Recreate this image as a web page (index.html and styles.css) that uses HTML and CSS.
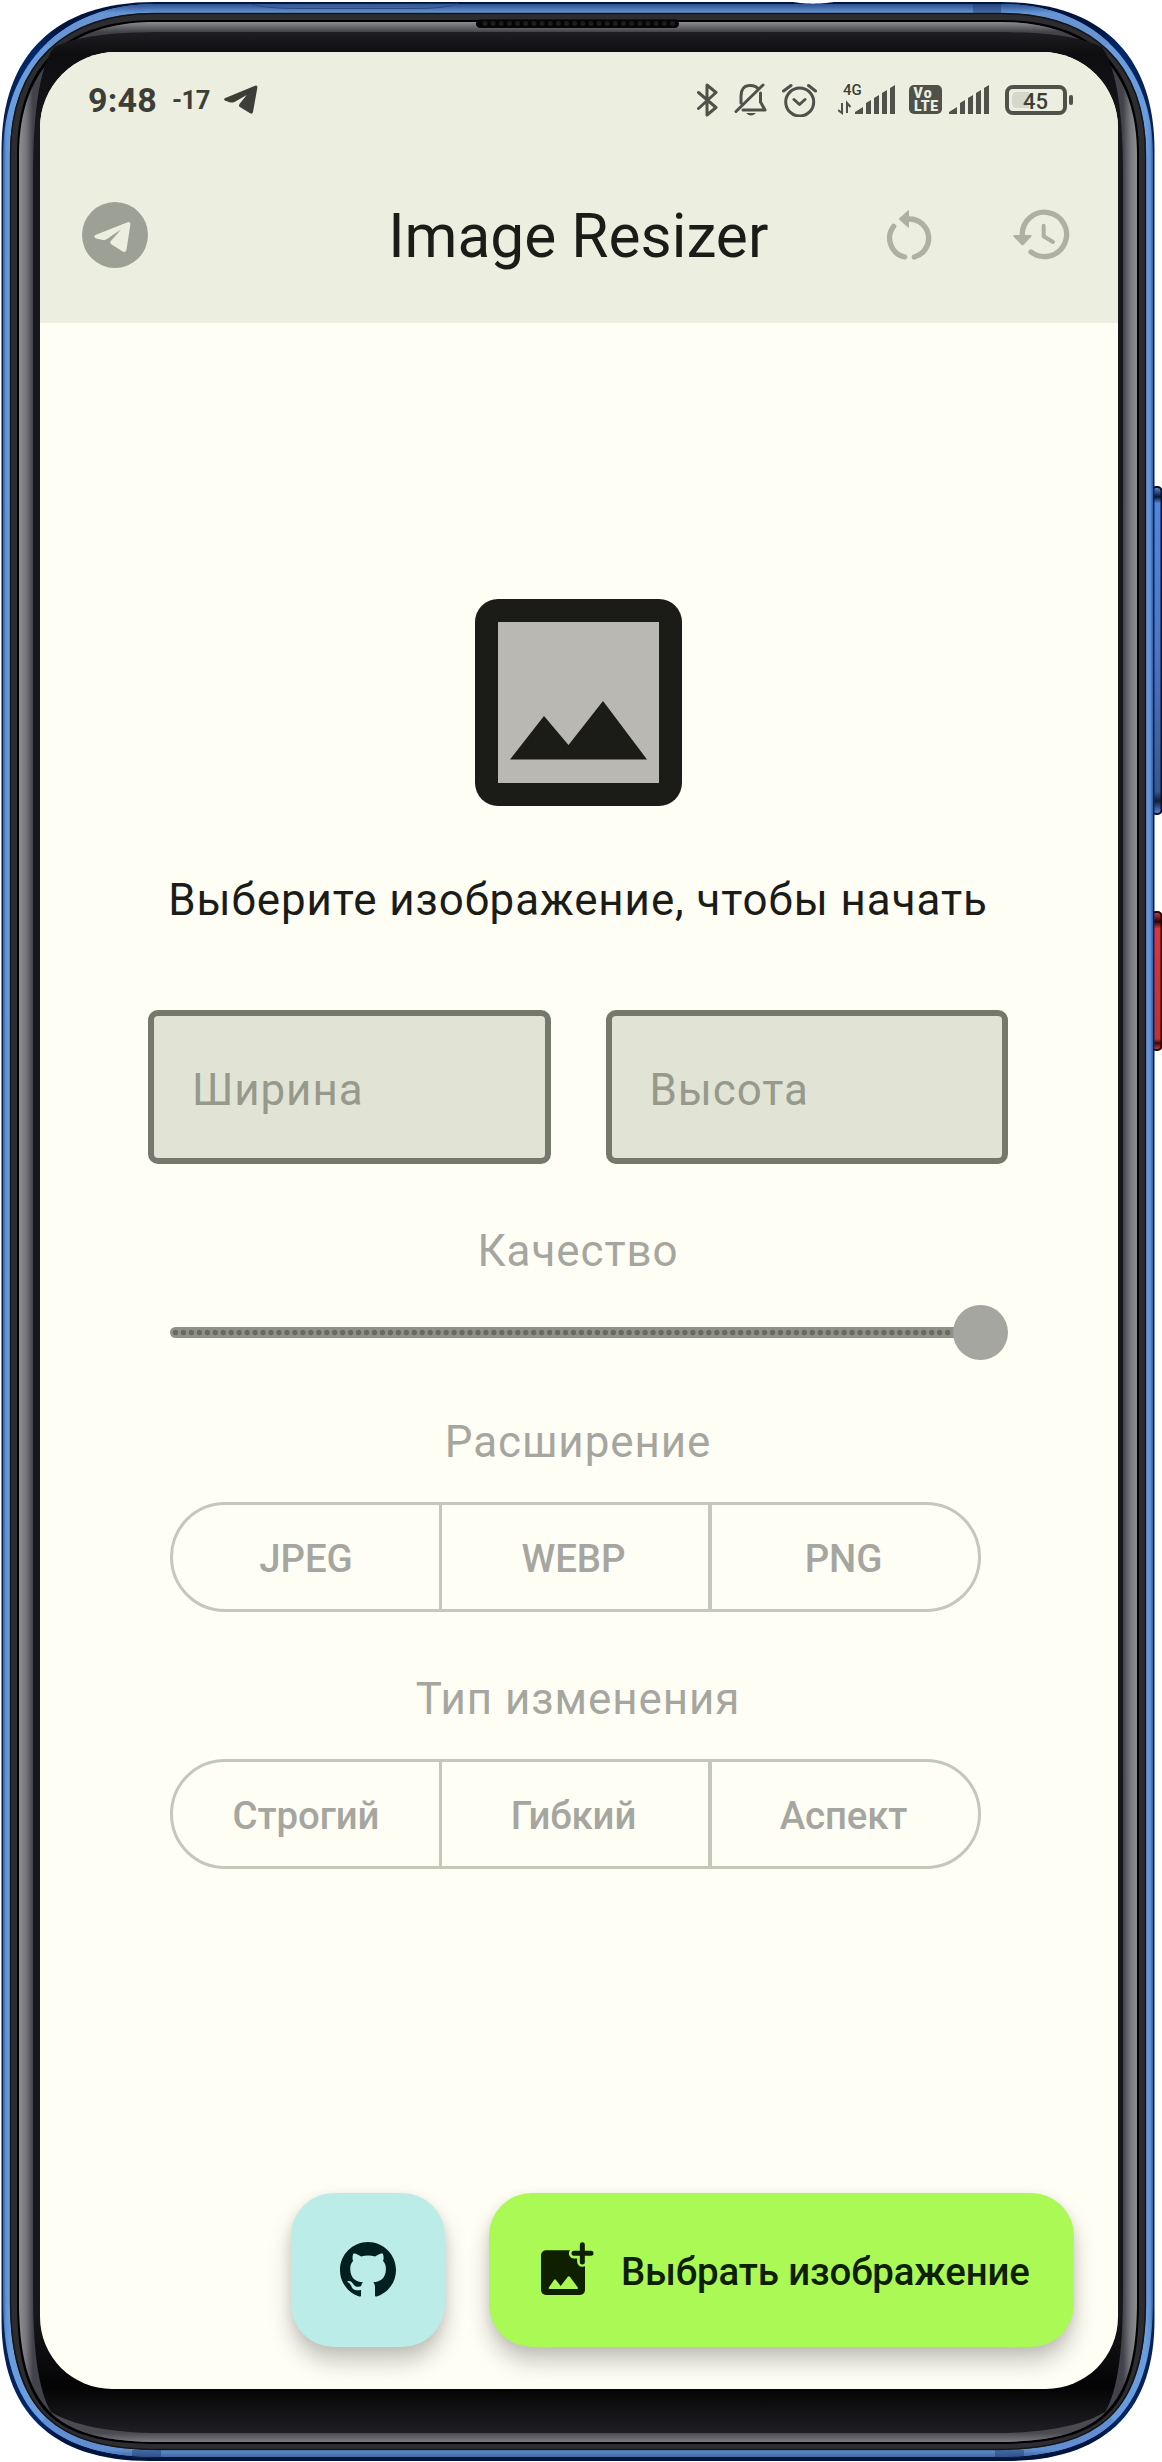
FILE: index.html
```html
<!DOCTYPE html>
<html lang="ru">
<head>
<meta charset="utf-8">
<title>Image Resizer</title>
<link rel="stylesheet" href="styles.css">
</head>
<body>
<div class="phone">
  <svg class="frame" width="1162" height="2462" viewBox="0 0 1162 2462" aria-hidden="true">
    <defs>
      <linearGradient id="blueSide" gradientUnits="userSpaceOnUse" x1="3" y1="0" x2="10" y2="0"><stop offset="0" stop-color="#2f5ea6"/><stop offset=".4" stop-color="#5f92d6"/><stop offset="1" stop-color="#6a9ddd"/></linearGradient>
      <linearGradient id="blueTop" gradientUnits="userSpaceOnUse" x1="0" y1="4" x2="0" y2="13"><stop offset="0" stop-color="#2c5090"/><stop offset="1" stop-color="#6795d3"/></linearGradient>
      <linearGradient id="blueBottom" gradientUnits="userSpaceOnUse" x1="0" y1="2450" x2="0" y2="2457"><stop offset="0" stop-color="#5f8fd2"/><stop offset="1" stop-color="#40699f"/></linearGradient>
      <linearGradient id="navy" gradientUnits="userSpaceOnUse" x1="0" y1="0" x2="60" y2="0"><stop offset="0" stop-color="#0a1f4e"/><stop offset=".6" stop-color="#00286a"/><stop offset="1" stop-color="#001440"/></linearGradient>
      <linearGradient id="graySide" gradientUnits="userSpaceOnUse" x1="19" y1="0" x2="33" y2="0"><stop offset="0" stop-color="#8f8f93"/><stop offset=".5" stop-color="#75757c"/><stop offset="1" stop-color="#42424b"/></linearGradient>
      <linearGradient id="grayTop" gradientUnits="userSpaceOnUse" x1="0" y1="22" x2="0" y2="32"><stop offset="0" stop-color="#8b8d90"/><stop offset="1" stop-color="#424248"/></linearGradient>
      <linearGradient id="grayBottom" gradientUnits="userSpaceOnUse" x1="0" y1="2433" x2="0" y2="2442"><stop offset="0" stop-color="#4a4a50"/><stop offset="1" stop-color="#7b7b82"/></linearGradient>
      <linearGradient id="bezel" gradientUnits="userSpaceOnUse" x1="0" y1="32" x2="0" y2="2433"><stop offset="0" stop-color="#1f1e23"/><stop offset=".009" stop-color="#0e0e10"/><stop offset=".04" stop-color="#17171b"/><stop offset=".95" stop-color="#17171b"/><stop offset=".981" stop-color="#040405"/><stop offset="1" stop-color="#1f1e23"/></linearGradient>
      <linearGradient id="volume" x1="0" y1="0" x2="0" y2="1"><stop offset="0" stop-color="#5a8de0"/><stop offset=".03" stop-color="#0a1430"/><stop offset=".05" stop-color="#5186e0"/><stop offset=".5" stop-color="#4a75c4"/><stop offset=".93" stop-color="#35588f"/><stop offset=".96" stop-color="#141f3a"/><stop offset="1" stop-color="#5a8de0"/></linearGradient>
      <linearGradient id="power" x1="0" y1="0" x2="0" y2="1"><stop offset="0" stop-color="#d8404a"/><stop offset=".07" stop-color="#260408"/><stop offset=".12" stop-color="#d8353f"/><stop offset=".92" stop-color="#c23038"/><stop offset=".95" stop-color="#3a080c"/><stop offset="1" stop-color="#d8404a"/></linearGradient>
      <clipPath id="topEdge"><path d="M0 0L53 48L150 120H580V0z"/></clipPath>
      <clipPath id="bottomEdge"><path d="M0 2462L50 2413L150 2320H580V2462z"/></clipPath>
      <g id="half">
        <path fill="url(#navy)" d="M579 2461H150C50 2461 1.5 2410 1.5 2320V150C1.5 55 55 2 155 2H579z"/>
        <path fill="url(#blueSide)" d="M579 2457H160C52 2457 3 2413 3 2300V155C3 63 64 4 155 4H579z"/>
        <g clip-path="url(#topEdge)"><path fill="url(#blueTop)" d="M579 2457H160C52 2457 3 2413 3 2300V155C3 63 64 4 155 4H579z"/></g>
        <g clip-path="url(#bottomEdge)"><path fill="url(#blueBottom)" d="M579 2457H160C52 2457 3 2413 3 2300V155C3 63 64 4 155 4H579z"/></g>
        <path fill="#2c2c31" d="M579 2450H160C56 2450 10 2412 10 2300V155C10 62 66 13 155 13H579z"/>
        <path fill="none" stroke="#151517" stroke-width="1.4" d="M579 2449.500H160C56 2449.500 10.500 2412 10.500 2300V155C10.500 62 66 13.500 155 13.500H579"/>
        <path fill="#000" d="M579 2444H160C52 2444 17 2412 17 2300V155C17 63 67 20 155 20H579z"/>
        <path fill="url(#graySide)" d="M579 2442H160C55 2442 19 2409 19 2300V155C19 66 70 22 155 22H579z"/>
        <g clip-path="url(#topEdge)"><path fill="url(#grayTop)" d="M579 200H19V155C19 66 70 22 155 22H579z"/></g>
        <g clip-path="url(#bottomEdge)"><path fill="url(#grayBottom)" d="M579 2442H160C55 2442 19 2409 19 2300V2200H579z"/></g>
        <path fill="url(#bezel)" d="M579 2433H160C110 2433 72 2425 51 2412C38 2390 33 2350 33 2290V175C33 120 38 70 54 47C78 36 110 32 165 32H579z"/>
      </g>
    </defs>
    <rect x="1152" y="487" width="9.500" height="327" rx="4" fill="url(#volume)" stroke="#0a1024" stroke-width="2"/>
    <rect x="1152" y="912" width="9.500" height="138" rx="4" fill="url(#power)" stroke="#1c0608" stroke-width="2"/>
    <use href="#half"/>
    <use href="#half" transform="translate(1156) scale(-1 1)"/>
    <path d="M250 4C262 7 275 8.500 300 8.500H415C435 8.500 450 7 458 3.500" fill="#39609c" fill-opacity=".5" stroke="#2d4a7a" stroke-width="1"/>
    <path d="M790 1C800 4.500 825 4.500 838 1z" fill="#fff"/>
    <g fill="#1a2f5e" fill-opacity=".4"><path d="M973 4h28v9h-28zM132 2450h29v8h-29zM995 2450h29v8h-29z"/></g>
    <rect x="476" y="19.500" width="203" height="8.500" rx="4.250" fill="#050505"/>
    <path d="M485 23.500H674" stroke="#1d1d1d" stroke-width="5" stroke-linecap="round" stroke-dasharray="0 8.150"/>
  </svg>

  <main class="screen">
    <header class="header">
      <div class="status">
        <span class="time">9:48</span>
        <span class="temp">-17</span>
        <svg class="plane" width="34" height="30" viewBox="673 257 102 90"><path fill="#3d3e38" d="M677 296L766 259Q774 256 773 265L760 338Q758 346 750 341L722 324Q715 320 720 313L741 287L706 307Q698 311 690 309L677 304Q669 300 677 296z"/></svg>
        <div class="status-icons">
          <svg width="21" height="34" viewBox="0 0 21 34"><path d="M1.500 9.500L19 24.500L10 32V2L19 9.500L1.500 25.500" class="line"/></svg>
          <svg width="33" height="34" viewBox="0 0 33 34"><path d="M29 2L2 28.500M7 20V13C7 6 10 3 15 2.500C19 2 22 3 24.500 6M26.500 10V19L31 27H9" class="line"/><path d="M12 30H22Q17 35 12 30z" fill="#50514a"/></svg>
          <svg width="35" height="34" viewBox="0 0 35 34"><circle cx="17.700" cy="19" r="14" class="line"/><path d="M12 16.500L17.500 21.500L23 16.500M1.500 8L9 2.500M26.500 2.500L33.500 8" class="line"/></svg>
          <svg width="57" height="42" viewBox="0 -4 57 42"><text x="5" y="12" class="net">4G</text><path d="M4 20V30L0 27M9 30V20L12.500 24" class="thin"/><path class="fill" d="M17 31V29L25 24V31zM28 31V20L33 17V31zM36 31V15L41 12V31zM44 31V10L49 7V31zM52 31V5L57 2V31z"/></svg>
          <svg width="33" height="30" viewBox="0 0 33 30"><rect width="33" height="29" rx="5" class="fill"/><text x="4.500" y="13" class="volte" textLength="18">Vo</text><text x="5" y="26" class="volte" textLength="24">LTE</text></svg>
          <svg width="40" height="34" viewBox="17 0 40 34"><path class="fill" d="M17 31V29L25 24V31zM28 31V20L33 17V31zM36 31V15L41 12V31zM44 31V10L49 7V31zM52 31V5L57 2V31z"/></svg>
          <svg width="69" height="30" viewBox="0 0 69 30"><path d="M12 7H24V23H12Q7 23 7 18V12Q7 7 12 7z" fill="#d5d7ca"/><rect x="2" y="2" width="58" height="26" rx="6" fill="none" stroke="#50514a" stroke-width="4"/><rect x="64" y="10" width="4" height="10" rx="2" class="fill"/><text x="18" y="23.500" class="level">45</text></svg>
        </div>
      </div>
      <div class="appbar">
        <svg class="channel" width="66" height="66" viewBox="246 605.500 198 198"><circle cx="345" cy="704.500" r="99" fill="#9da094"/><path fill="#ecefe0" d="M288 704L381 667Q392 662 391 674L380 746Q378 760 367 753L336 734Q327 729 333 722L364 687L322 716Q315 721 306 719L288 715Q278 709 288 704z"/></svg>
        <h1 class="title">Image Resizer</h1>
        <div class="actions">
          <svg width="46" height="50" viewBox="372 628 138 150"><path d="M428 769A58 58 0 0 1 395 677M441 655A58 58 0 0 1 457 769" class="action"/><path d="M412 653L437 630Q441 627 441 632V678Q441 683 437 680L412 657Q410 655 412 653z" fill="#aeb0a2"/></svg>
          <svg width="57" height="52" viewBox="751 627 171 156"><path d="M779 708A66.500 66.500 0 1 1 805 756" class="action"/><path d="M843 677V709L871 726" class="action hands"/><path d="M755 705H803Q809 706 805 711L783 734Q780 738 776 734L753 710Q750 706 755 705z" fill="#aeb0a2"/></svg>
        </div>
      </div>
    </header>

    <section class="content">
      <svg class="picture" width="207" height="207" viewBox="0 0 207 207"><rect width="207" height="207" rx="23" fill="#1b1c18"/><path d="M23 23H184V184H23z" fill="#b9b8b3"/><path d="M35 160.500L69 117L93.500 146L128 102L172 160.500z" fill="#1b1c18"/></svg>
      <p class="prompt">Выберите изображение, чтобы начать</p>
      <div class="fields">
        <div class="field">Ширина</div>
        <div class="field">Высота</div>
      </div>
      <p class="label label-quality">Качество</p>
      <div class="slider">
        <svg width="838" height="55" viewBox="0 0 838 55"><path d="M5.500 27.500H810" stroke="#90928a" stroke-width="11" stroke-linecap="round"/><path d="M5.500 27.500H800" stroke="#686a62" stroke-width="5.400" stroke-linecap="round" stroke-dasharray="0 7.960"/><circle cx="810.500" cy="27.500" r="27.500" fill="#a6a6a0"/></svg>
      </div>
      <p class="label label-format">Расширение</p>
      <div class="segments"><span>JPEG</span><span>WEBP</span><span>PNG</span></div>
      <p class="label label-type">Тип изменения</p>
      <div class="segments"><span>Строгий</span><span>Гибкий</span><span>Аспект</span></div>
    </section>

    <footer class="fabs">
      <div class="fab fab-github">
        <svg width="56" height="56" viewBox="0 0 16 16"><path fill="#002020" d="M8 0C3.580 0 0 3.580 0 8c0 3.540 2.290 6.530 5.470 7.590.4.070.55-.17.55-.38 0-.19-.01-.82-.01-1.490-2.010.37-2.530-.49-2.690-.94-.09-.23-.48-.94-.82-1.130-.28-.15-.68-.52-.01-.53.63-.01 1.080.58 1.230.82.72 1.210 1.870.87 2.330.66.07-.52.28-.87.51-1.070-1.780-.2-3.640-.89-3.640-3.950 0-.87.31-1.590.82-2.150-.08-.2-.36-1.020.08-2.120 0 0 .67-.21 2.200.82.64-.18 1.320-.27 2-.27s1.360.09 2 .27c1.530-1.040 2.200-.82 2.200-.82.44 1.100.16 1.920.08 2.120.51.56.82 1.270.82 2.150 0 3.070-1.870 3.750-3.650 3.950.29.25.54.73.54 1.480 0 1.070-.01 1.930-.01 2.200 0 .21.15.46.55.38A8.010 8.010 0 0 0 16 8c0-4.420-3.580-8-8-8z"/></svg>
      </div>
      <div class="fab fab-pick">
        <svg width="53" height="54" viewBox="843 246 159 162"><rect x="843" y="271" width="132" height="134" rx="15" fill="#0f2000"/><path d="M942 280H993M967 254V305" stroke="#aaf955" stroke-width="31" stroke-linecap="round"/><path d="M942 280H993M967 254V306" stroke="#0f2000" stroke-width="15" stroke-linecap="round"/><path d="M867 382L882 360Q885 356 888 360L902 378L923 351Q927 346 930 351L953 382Q955 387 950 387H869Q864 387 867 382z" fill="#aaf955"/></svg>
        <span>Выбрать изображение</span>
      </div>
    </footer>
  </main>
</div>
</body>
</html>
```

FILE: styles.css
```css
* { box-sizing: border-box; }
body { margin: 0; background: #fff; font-family: Roboto, "Noto Sans", sans-serif; color: #1b1c18; }
svg { display: block; flex: none; }
p, h1 { margin: 0; font-weight: 400; }

.phone { display: grid; width: 1162px; height: 2462px; overflow: hidden; }
.frame, .screen { grid-area: 1 / 1; }
.screen {
  display: flex; flex-direction: column;
  width: 1078px; height: 2337px; margin: 52px 0 0 39.5px;
  border-radius: 76px 76px 72px 72px; overflow: hidden; background: #fefef5;
}

.header { height: 271px; background: #ecefe0; }
.status { display: flex; align-items: center; height: 96px; padding: 0 43.5px 0 48.5px; }
.time { width: 84px; font-size: 34px; font-weight: 700; letter-spacing: .2px; color: #3d3e38; }
.temp { width: 52px; font-size: 25.5px; font-weight: 700; letter-spacing: -.5px; color: #3d3e38; }
.status-icons { display: flex; align-items: center; margin-left: auto; }
.status-icons svg:nth-child(2) { margin-left: 16px; }
.status-icons svg:nth-child(3) { margin-left: 15px; }
.status-icons svg:nth-child(4) { margin-left: 21px; }
.status-icons svg:nth-child(5) { margin-left: 14px; }
.status-icons svg:nth-child(6) { margin-left: 7px; }
.status-icons svg:nth-child(7) { margin-left: 16px; }
.line { fill: none; stroke: #50514a; stroke-width: 3; stroke-linecap: round; stroke-linejoin: round; }
.thin { fill: none; stroke: #50514a; stroke-width: 2; }
.fill { fill: #50514a; }
.net { font: 500 15px Roboto, sans-serif; fill: #3d3e38; }
.volte { font: 900 14px Roboto, sans-serif; fill: #ecefe0; }
.level { font: 500 22px Roboto, sans-serif; fill: #3d3e38; }

.appbar { display: grid; grid-template-columns: 1fr auto 1fr; align-items: center; height: 175px; padding: 0 48px 0 42.5px; }
.channel { margin-bottom: 2px; }
.title { padding: 3px 0 0 5px; font-size: 60.4px; line-height: 76px; }
.actions { display: flex; align-items: center; justify-content: flex-end; gap: 81px; padding-bottom: 2px; }
.action { fill: none; stroke: #aeb0a2; stroke-width: 16; stroke-linecap: round; stroke-linejoin: round; }
.hands { stroke-width: 12; }

.content { display: flex; flex-direction: column; align-items: center; flex: 1; padding: 276px 1px 0 0; }
.prompt, .label, .field { font-size: 43.9px; line-height: 66px; letter-spacing: .95px; white-space: nowrap; }
.prompt { margin-top: 61px; }
.fields { display: flex; gap: 55px; width: 860px; margin-top: 77px; }
.field {
  flex: 1; height: 154px; padding: 41px 38px; border: 6px solid #75796c; border-radius: 10px;
  background: #e1e4d5; color: #96998c;
}
.label { color: #a6a6a0; }
.label-quality { margin-top: 54px; }
.slider { width: 838px; margin: 21px 0 0 22px; }
.label-format { margin-top: 49px; }
.label-type { margin-top: 54px; }
.segments {
  display: grid; grid-template-columns: 266px 269px 1fr; width: 811px; height: 110px; margin: 27px 5px 0 0;
  border: 3px solid #c4c8b9; border-radius: 55px;
}
.segments span {
  display: flex; align-items: center; justify-content: center; padding-top: 2px;
  font-size: 38.4px; font-weight: 500; color: #a6a6a0; letter-spacing: -.1px;
}
.segments span + span { padding-right: 3px; border-left: 3px solid #c4c8b9; }
.segments span:last-child { border-left-width: 4px; }

.fabs { display: flex; justify-content: flex-end; gap: 44px; padding: 0 43.5px 42px 0; }
.fab {
  display: flex; align-items: center; height: 154px; border-radius: 43px;
  box-shadow: 0 15px 22px rgba(0, 0, 0, .22), 0 2px 12px rgba(0, 0, 0, .07);
}
.fab-github { justify-content: center; width: 154px; background: #bbece8; }
.fab-pick {
  gap: 27px; width: 585px; padding-left: 52px; background: #aaf955; color: #0f2000;
  font-size: 38.4px; font-weight: 500; letter-spacing: -.12px; white-space: nowrap;
}
.fab-pick svg { margin-bottom: 2px; }
.fab-pick span { padding-top: 2px; }
```
